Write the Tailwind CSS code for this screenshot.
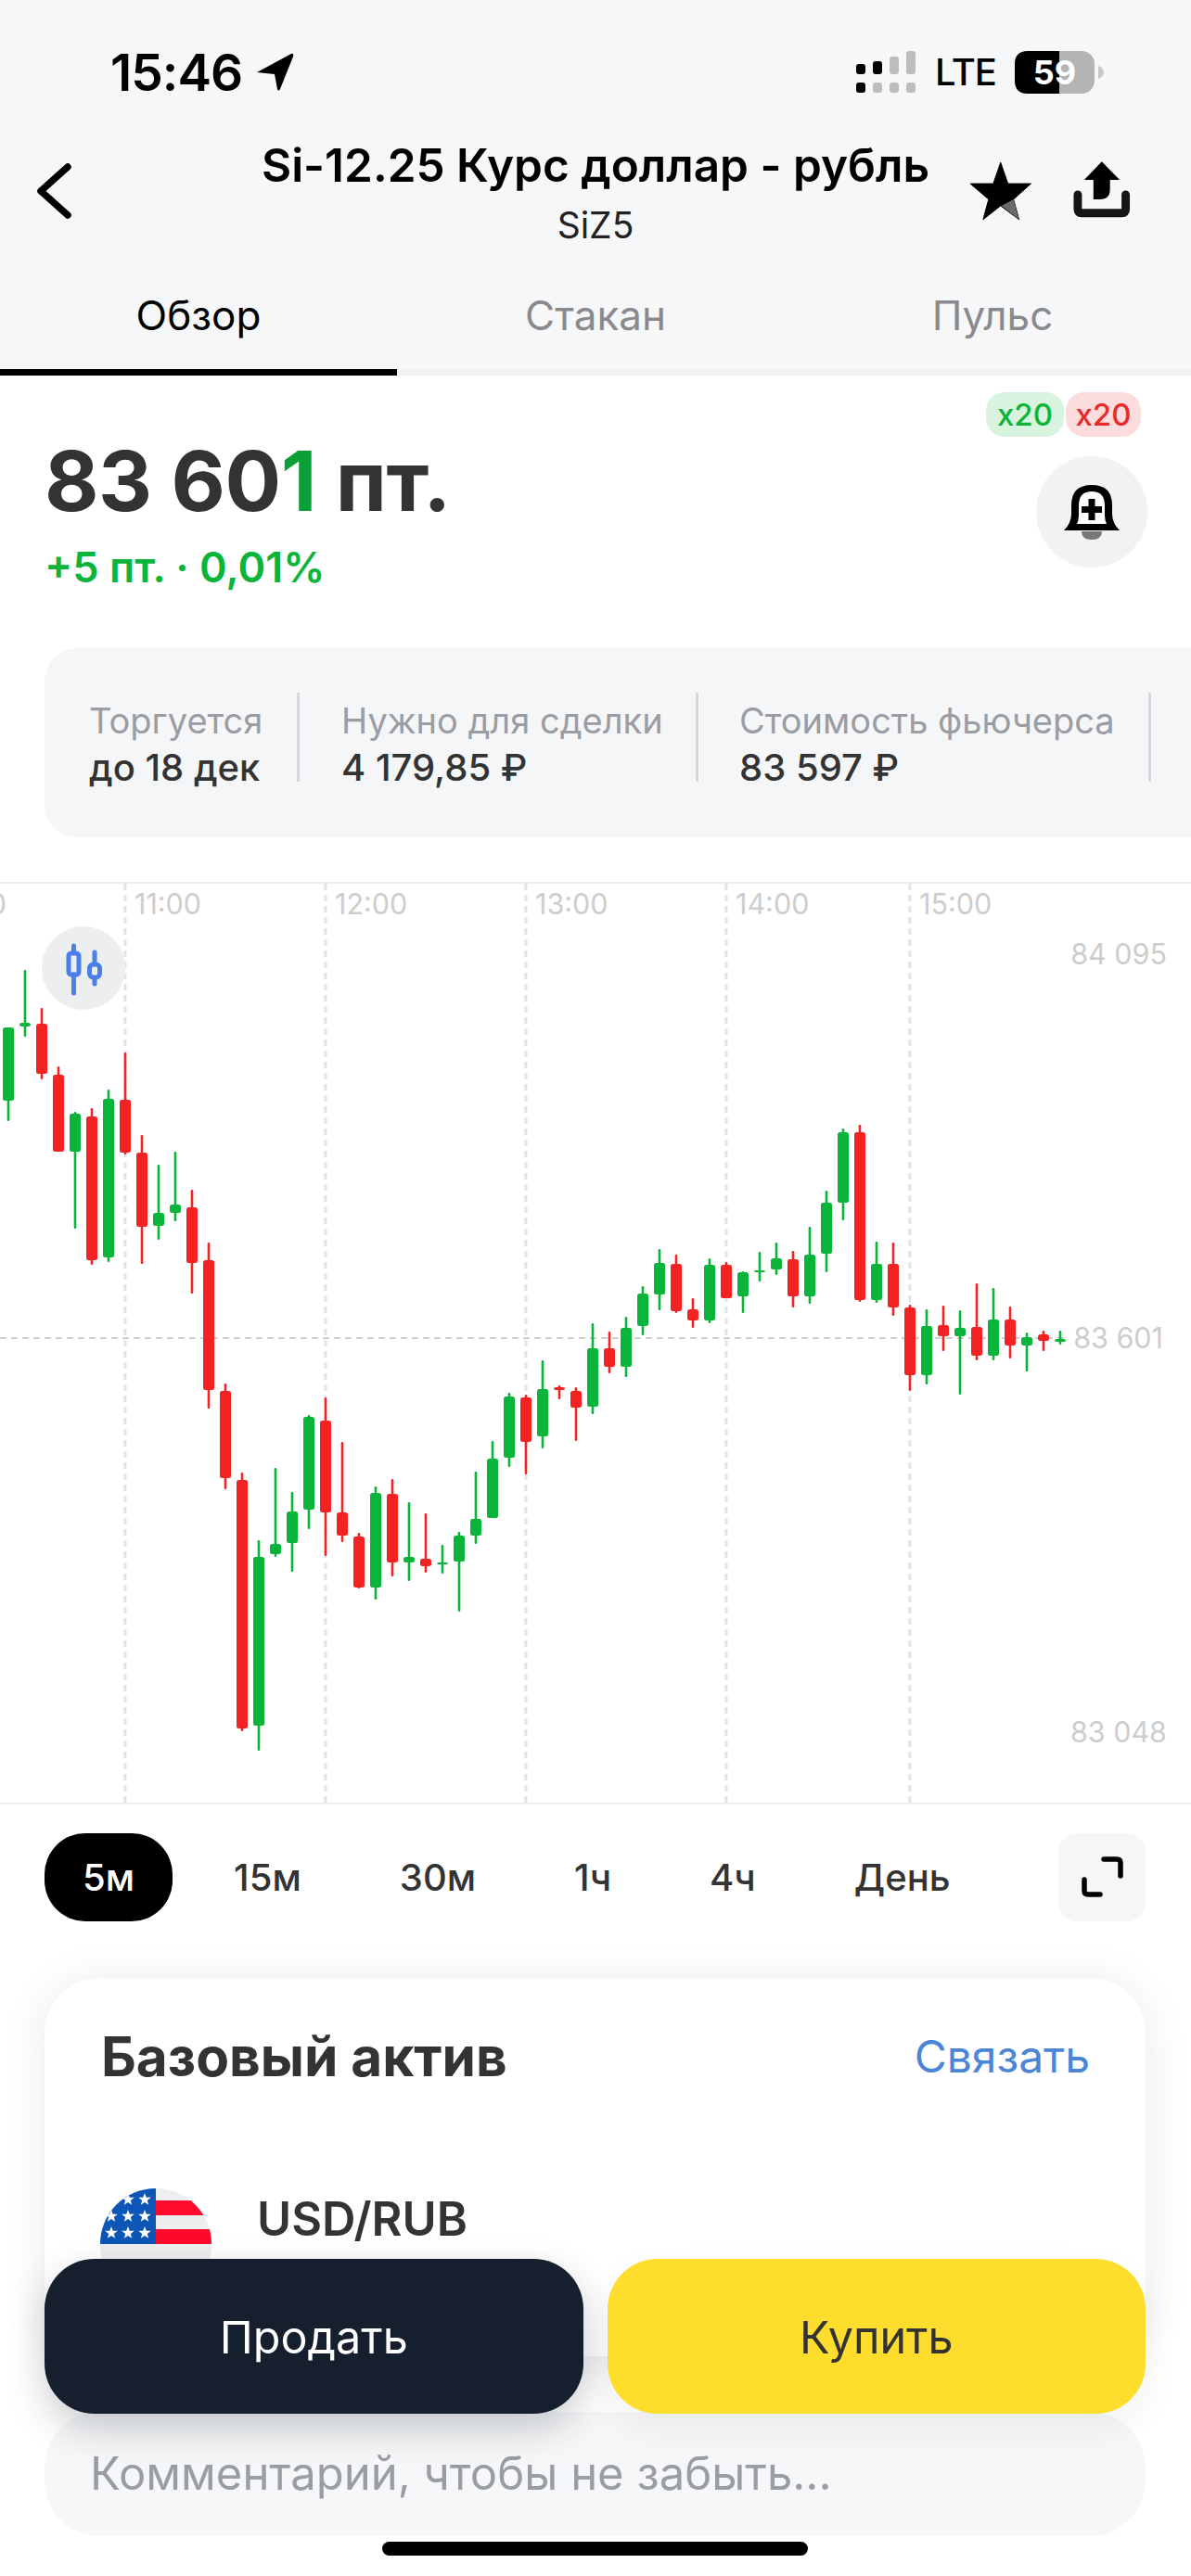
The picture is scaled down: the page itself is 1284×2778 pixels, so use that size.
<!DOCTYPE html>
<html>
<head>
    <meta charset="utf-8">
    <script src="https://cdn.jsdelivr.net/npm/@tailwindcss/browser@4"></script>
    <title>Si-12.25</title>
</head>
<body class="m-0 p-0 bg-white">
<div class="relative w-[1284px] h-[2778px] overflow-hidden bg-white font-['Inter',sans-serif] text-[#333]">

    <!-- HEADER -->
    <div class="h-[405px] bg-[#f6f7f9] text-black">
        <!-- status bar -->
        <div class="h-[152px] pt-[4px] flex items-center justify-between pl-[119px] pr-[94px]">
            <div class="flex items-center gap-[14px]">
                <span class="text-[55px] leading-[60px] font-semibold tracking-[-1px]">15:46</span>
                <svg class="w-[42px] h-[42px]" viewBox="277 56 42 42"><path d="M279 77 L316 57 Q319 56 318 60 L304 95 Q302 98 301 95 L298 79 Z" fill="#000"/></svg>
            </div>
            <div class="flex items-center">
                <svg class="w-[68px] h-[46px]" viewBox="924 53 68 46">
                    <rect x="925" y="67" width="10" height="11" rx="3" fill="#000"/><rect x="943" y="64" width="10" height="14" rx="3" fill="#000"/>
                    <rect x="961" y="59" width="10" height="19" rx="3" fill="#bdbdbd"/><rect x="979" y="53" width="10" height="25" rx="3" fill="#bdbdbd"/>
                    <rect x="925" y="87" width="10" height="11" rx="3" fill="#000"/><rect x="943" y="87" width="10" height="11" rx="3" fill="#bdbdbd"/>
                    <rect x="961" y="87" width="10" height="11" rx="3" fill="#bdbdbd"/><rect x="979" y="87" width="10" height="11" rx="3" fill="#bdbdbd"/>
                </svg>
                <span class="ml-[18px] text-[40px] leading-[50px] font-medium tracking-[-1px]">LTE</span>
                <div class="relative ml-[20px] w-[96px] h-[46px] flex items-center">
                    <svg class="absolute inset-0 w-[96px] h-[46px]" viewBox="0 0 96 46">
                        <rect x="0" y="0" width="86" height="46" rx="14" fill="#b4b4b4"/>
                        <path d="M14 0 H48 V46 H14 Q0 46 0 32 V14 Q0 0 14 0 Z" fill="#000"/>
                        <path d="M90 16 Q96 18 96 23 Q96 28 90 30 Z" fill="#c8c8c8"/>
                    </svg>
                    <span class="relative w-[86px] text-center text-[36px] leading-[46px] font-bold text-white">59</span>
                </div>
            </div>
        </div>
        <!-- nav -->
        <div class="h-[130px] flex">
            <div class="w-[240px] pl-[36px] pt-[20px]">
                <svg class="w-[46px] h-[66px]" viewBox="36 172 46 66"><path d="M73 180 L44 206 L73 232" fill="none" stroke="#000" stroke-width="7.5" stroke-linecap="round" stroke-linejoin="round"/></svg>
            </div>
            <div class="flex-1 text-center -mt-[2px]">
                <div class="text-[49.5px] leading-[56px] font-semibold whitespace-nowrap">Si-12.25 Курс доллар - рубль</div>
                <div class="mt-[15px] text-[39px] leading-[44px] text-[#222]">SiZ5</div>
            </div>
            <div class="w-[240px] flex justify-end pr-[63px] pt-[20px] gap-[42px]">
                <svg class="w-[70px] h-[70px]" viewBox="1042 172 70 70">
                    <path d="M1077 175 L1085 198 L1110 198 L1091 215 L1097 237 L1077 222 L1058 237 L1064 215 L1044 198 L1069 198 Z" fill="#000" stroke="#000" stroke-width="1" stroke-linejoin="round"/>
                    <path d="M1078 222 L1091 215 L1097 237 Z" fill="#6a6a6a"/>
                </svg>
                <svg class="w-[66px] h-[66px]" viewBox="1155 172 66 66">
                    <path d="M1188 174 L1207.5 194 H1197 V204 Q1197 215 1186 215 H1179 V194 H1169 Z" fill="#000"/>
                    <path d="M1162 210 V226 Q1162 230 1166 230 H1210 Q1214 230 1214 226 V210" fill="none" stroke="#151515" stroke-width="9" stroke-linecap="round" stroke-linejoin="round"/>
                </svg>
            </div>
        </div>
        <!-- tabs -->
        <div class="h-[117px] flex items-center text-[44px] leading-[50px] -mt-[1px]">
            <div class="flex-1 text-center">Обзор</div>
            <div class="flex-1 text-center text-[#8a8a8e]">Стакан</div>
            <div class="flex-1 text-center text-[#8a8a8e]">Пульс</div>
        </div>
        <div class="h-[7px] bg-[#f1f2f4]"><div class="w-[428px] h-[7px] bg-black"></div></div>
    </div>

    <!-- PRICE -->
    <div class="h-[294px] flex justify-between pl-[48px] pr-[48px]">
        <div class="pt-[64px]">
            <div class="text-[90px] leading-[100px] font-bold tracking-[-0.5px] whitespace-nowrap">83 60<span class="text-[#0a9f37]">1</span> пт.</div>
            <div class="mt-[18px] text-[45px] leading-[50px] font-semibold text-[#0ab53a] whitespace-nowrap">+5 пт. · 0,01%</div>
        </div>
        <div class="flex flex-col items-end">
            <div class="mt-[18px] mr-[6px] flex gap-[2px] text-[33px] leading-[48px] font-medium">
                <div class="w-[84px] h-[48px] rounded-[20px] text-center bg-[#d8f3de] text-[#0ab53a]">x20</div>
                <div class="w-[81px] h-[48px] rounded-[20px] text-center bg-[#fcdcdc] text-[#e92a2a]">x20</div>
            </div>
            <div class="mt-[21px] mr-[-1px] w-[120px] h-[120px] rounded-full bg-[#f1f2f3] flex items-center justify-center">
                <svg class="w-[120px] h-[120px]" viewBox="1116 492 120 120">
                    <path d="M1165 573 H1187 Q1187 582 1176 582 Q1165 582 1165 573 Z" fill="#777"/>
                    <path d="M1154 545 Q1154 523 1176 523 Q1198 523 1198 545 V554 Q1198 564 1206 572 H1146 Q1154 564 1154 554 Z" fill="#000"/>
                    <path d="M1162 545 Q1162 530 1176 530 Q1190 530 1190 545 V556 Q1190 561 1192 565 H1160 Q1162 561 1162 556 Z" fill="#fff"/>
                    <path d="M1172.5 538 H1179.5 V546 H1187 V553 H1179.5 V561 H1172.5 V553 H1165 V546 H1172.5 Z" fill="#000"/>
                </svg>
            </div>
        </div>
    </div>

    <!-- INFO CARD -->
    <div class="ml-[48px] h-[204px] rounded-l-[36px] bg-[#f5f6f8] flex items-center pb-[13px] overflow-hidden whitespace-nowrap">
        <div class="w-[275px] h-[96px] shrink-0 pl-[48px] border-r-[3px] border-[#d4d6da]">
            <div class="pt-[8px] text-[38px] leading-[44px] text-[#9a9da3]">Торгуется</div>
            <div class="mt-[7px] text-[40px] leading-[44px] font-medium">до 18 дек</div>
        </div>
        <div class="w-[430px] h-[96px] shrink-0 pl-[45px] border-r-[3px] border-[#d4d6da]">
            <div class="pt-[8px] text-[38px] leading-[44px] text-[#9a9da3]">Нужно для сделки</div>
            <div class="mt-[7px] text-[40px] leading-[44px] font-medium">4 179,85 ₽</div>
        </div>
        <div class="w-[488px] h-[96px] shrink-0 pl-[44px] border-r-[3px] border-[#d4d6da]">
            <div class="pt-[8px] text-[38px] leading-[44px] text-[#9a9da3]">Стоимость фьючерса</div>
            <div class="mt-[7px] text-[40px] leading-[44px] font-medium">83 597 ₽</div>
        </div>
    </div>

    <!-- CHART -->
    <svg id="chart" class="block mt-[48px] w-[1284px] h-[995px]" viewBox="0 951 1284 995">
        <rect x="0" y="951" width="1284" height="2" fill="#ececee"/>
        <rect x="0" y="1944" width="1284" height="2" fill="#ececee"/>
        <g stroke="#e2e3e5" stroke-width="3" stroke-dasharray="7 5">
            <line x1="135" y1="953" x2="135" y2="1944"/>
            <line x1="351" y1="953" x2="351" y2="1944"/>
            <line x1="567" y1="953" x2="567" y2="1944"/>
            <line x1="783" y1="953" x2="783" y2="1944"/>
            <line x1="981" y1="953" x2="981" y2="1944"/>
        </g>
        <line x1="0" y1="1443" x2="1150" y2="1443" stroke="#cfcfcf" stroke-width="2" stroke-dasharray="7 5"/>
        <g fill="#cdcdcd" font-size="30.5">
            <text x="7" y="986" text-anchor="end">10:00</text>
            <text x="145" y="986">11:00</text>
            <text x="361" y="986">12:00</text>
            <text x="577" y="986">13:00</text>
            <text x="793" y="986">14:00</text>
            <text x="991" y="986">15:00</text>
            <text x="1258" y="1040" text-anchor="end">84 095</text>
            <text x="1254" y="1454" text-anchor="end">83 601</text>
            <text x="1258" y="1879" text-anchor="end">83 048</text>
        </g>
        <g id="candles"></g>
        <circle cx="90" cy="1044" r="45" fill="#eceef0"/>
        <g stroke="#4a80e8" stroke-width="5" stroke-linecap="round" fill="none">
            <path d="M79.5 1020 V1027 M79.5 1051 V1071"/>
            <rect x="74" y="1028" width="11" height="23" rx="3"/>
            <path d="M102 1027 V1040 M102 1055 V1061"/>
            <rect x="96.5" y="1040" width="11" height="14" rx="4"/>
        </g>
    </svg>

    <!-- PERIODS -->
    <div class="mt-[31px] h-[95px] pl-[48px] pr-[49px] flex items-center justify-between">
        <div class="flex items-center gap-[26px] text-[40px] leading-[44px] font-medium">
            <div class="h-[95px] px-[41px] rounded-[44px] bg-black text-white flex items-center">5м</div>
            <div class="px-[40px]">15м</div>
            <div class="px-[40px]">30м</div>
            <div class="px-[40px]">1ч</div>
            <div class="px-[40px]">4ч</div>
            <div class="px-[40px]">День</div>
        </div>
        <div class="w-[94px] h-[95px] rounded-[20px] bg-[#f5f6f8] flex items-center justify-center">
            <svg class="w-[48px] h-[48px]" viewBox="1164 2002 48 48">
                <path d="M1190 2006 H1204 Q1208 2006 1208 2010 V2024 M1169 2028 V2040 Q1169 2044 1173 2044 H1186" fill="none" stroke="#000" stroke-width="5.5" stroke-linecap="round"/>
            </svg>
        </div>
    </div>

    <!-- BASE ASSET -->
    <div class="mt-[61px] mx-[48px] mr-[49px] h-[408px] rounded-[60px] bg-white shadow-[0_4px_50px_rgba(0,0,0,0.09)] pt-[55px] pl-[61px] pr-[60px]">
        <div class="flex items-center justify-between">
            <div class="text-[58.5px] leading-[60px] font-bold whitespace-nowrap">Базовый актив</div>
            <div class="text-[48px] leading-[60px] text-[#4a85d8]">Связать</div>
        </div>
        <div class="mt-[112px] flex items-start">
            <svg class="w-[120px] h-[120px] -ml-[1px]" viewBox="108 2361 120 120">
                <defs>
                    <clipPath id="flagclip"><circle cx="168" cy="2421" r="60"/></clipPath>
                    <polygon id="st" points="0,-7 1.8,-2.2 6.8,-2.2 2.8,1 4.2,5.8 0,3 -4.2,5.8 -2.8,1 -6.8,-2.2 -1.8,-2.2" fill="#fff"/>
                </defs>
                <g clip-path="url(#flagclip)">
                    <rect x="108" y="2361" width="120" height="120" fill="#eeeef0"/>
                    <rect x="108" y="2361" width="60" height="60" fill="#0c56b8"/>
                    <rect x="168" y="2374" width="60" height="16" fill="#ff0a2d"/>
                    <rect x="168" y="2405" width="60" height="16" fill="#ff0a2d"/>
                    <use href="#st" x="138" y="2373"/><use href="#st" x="156" y="2373"/>
                    <use href="#st" x="120" y="2391"/><use href="#st" x="138" y="2391"/><use href="#st" x="156" y="2391"/>
                    <use href="#st" x="120" y="2409"/><use href="#st" x="138" y="2409"/><use href="#st" x="156" y="2409"/>
                </g>
            </svg>
            <div class="ml-[49px] pt-[3px] text-[50.5px] leading-[60px] font-semibold">USD/RUB</div>
        </div>
    </div>

    <!-- BOTTOM BAR, sits over the page -->
    <div class="absolute left-0 right-0 top-[2436px] px-[48px] pr-[49px]">
        <div class="relative z-10 flex gap-[26px] h-[167px] text-[48.5px]">
            <div class="flex-1 pt-[3px] rounded-[54px] bg-[#151f2d] text-white flex items-center justify-center shadow-[0_16px_40px_rgba(20,30,45,0.22)]">Продать</div>
            <div class="flex-1 pt-[3px] rounded-[54px] bg-[#fedd2c] flex items-center justify-center shadow-[0_16px_40px_rgba(20,30,45,0.06)]">Купить</div>
        </div>
        <div class="-mt-[2px] h-[134px] rounded-[60px] bg-[#f6f7f8] flex items-center pl-[49px] text-[49px] leading-[60px] text-[#9a9da3] whitespace-nowrap">Комментарий, чтобы не забыть...</div>
        <div class="mt-[6px] mx-auto w-[459px] h-[15px] rounded-full bg-black"></div>
    </div>
</div>

<script>
    // x, green?, wick top, body top, body bottom, wick bottom
    const candles = [
        [9,1,1108,1108,1187,1209],[27,1,1046,1103,1107,1118],[45,0,1087,1104,1158,1164],[63,0,1150,1159,1242,1242],
        [81,1,1199,1201,1242,1325],[99,0,1195,1204,1359,1364],[117,1,1175,1185,1356,1361],[135,0,1135,1186,1243,1245],
        [153,0,1224,1243,1323,1363],[171,1,1256,1308,1322,1337],[189,1,1242,1299,1308,1317],[207,0,1283,1302,1362,1395],
        [225,0,1340,1359,1499,1519],[243,0,1492,1500,1594,1606],[261,0,1588,1596,1864,1867],[279,1,1661,1679,1861,1888],
        [297,1,1583,1665,1676,1679],[315,1,1609,1630,1664,1695],[333,1,1526,1528,1628,1649],[351,0,1507,1532,1631,1678],
        [369,0,1555,1631,1656,1663],[387,0,1653,1657,1712,1713],[405,1,1603,1610,1712,1725],[423,0,1595,1611,1685,1700],
        [441,1,1620,1679,1685,1705],[459,0,1632,1681,1689,1696],[477,1,1666,1685,1687,1697],[495,1,1652,1656,1684,1738],
        [513,1,1587,1638,1656,1665],[531,1,1554,1573,1637,1637],[549,1,1502,1506,1572,1582],[567,0,1504,1507,1555,1590],
        [585,1,1467,1498,1549,1562],[603,0,1494,1496,1499,1509],[621,0,1496,1500,1518,1554],[639,1,1427,1454,1517,1525],
        [657,0,1436,1454,1474,1481],[675,1,1420,1432,1474,1485],[693,1,1387,1395,1430,1440],[711,1,1347,1362,1396,1413],
        [729,0,1353,1363,1414,1416],[747,0,1400,1412,1424,1432],[765,1,1357,1364,1424,1427],[783,0,1361,1364,1400,1400],
        [801,1,1371,1372,1398,1416],[819,1,1350,1370,1371,1382],[837,1,1340,1357,1369,1375],[855,0,1349,1358,1398,1410],
        [873,1,1323,1353,1398,1406],[891,1,1284,1297,1352,1372],[909,1,1217,1221,1297,1316],[927,0,1213,1221,1402,1404],
        [945,1,1339,1363,1402,1405],[963,0,1340,1363,1410,1419],[981,0,1407,1410,1483,1500],[999,1,1412,1430,1483,1493],
        [1017,0,1408,1429,1441,1457],[1035,1,1413,1432,1441,1504],[1053,0,1384,1431,1462,1467],[1071,1,1389,1423,1462,1467],
        [1089,0,1409,1423,1451,1465],[1107,1,1437,1442,1451,1479],[1125,0,1435,1439,1446,1457],[1143,1,1435,1444,1447,1450]
    ];
    let svg = '';
    for (const [x, up, wt, bt, bb, wb] of candles) {
        const c = up ? '#0ab33a' : '#f42323';
        svg += `<rect x="${x - 1.3}" y="${wt}" width="2.6" height="${wb - wt}" rx="1.3" fill="${c}"/>`;
        svg += `<rect x="${x - 6}" y="${bt}" width="12" height="${Math.max(bb - bt, 2)}" rx="2.5" fill="${c}"/>`;
    }
    document.getElementById('candles').innerHTML = svg;
</script>
</body>
</html>
